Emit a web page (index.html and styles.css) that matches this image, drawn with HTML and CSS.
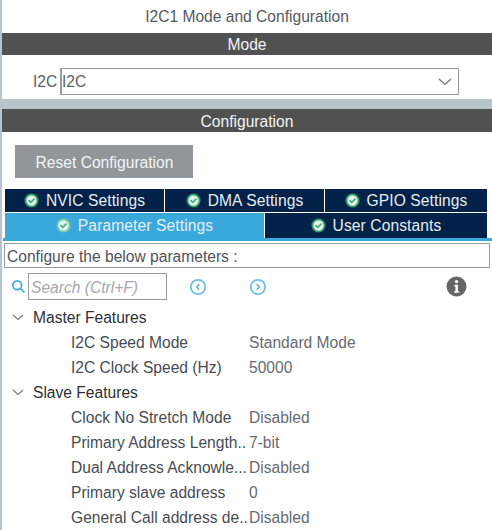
FILE: index.html
```html
<!DOCTYPE html>
<html lang="en">
<head>
  <meta charset="UTF-8">
  <title>I2C1 Mode and Configuration</title>
  <link rel="stylesheet" href="styles.css">
</head>
<body>
  <div class="panel">
    <div class="title">I2C1 Mode and Configuration</div>
    <div class="bar">Mode</div>
    <div class="mode-row">
      <span class="mode-label">I2C</span>
      <div class="select">
        <span>I2C</span>
        <svg class="caret" width="14" height="8" viewBox="0 0 14 8"><path d="M1 1l6 5.5L13 1" fill="none" stroke="#6d7276" stroke-width="1.2"/></svg>
      </div>
    </div>
    <div class="band"></div>
    <div class="bar bar-config">Configuration</div>
    <div class="reset-row"><button class="reset">Reset Configuration</button></div>

    <div class="tabs">
      <div class="tab-row">
        <div class="tab tab-nvic"><svg class="check" viewBox="0 0 16 16"><circle cx="8" cy="8" r="6.5" fill="#e4f3ea" stroke="#2f9e68" stroke-width="2"/><path d="M4.8 7.6l2.4 2.4 4-4" fill="none" stroke="#3fae78" stroke-width="1.6"/></svg>NVIC Settings</div>
        <div class="tab tab-dma"><svg class="check" viewBox="0 0 16 16"><circle cx="8" cy="8" r="6.5" fill="#e4f3ea" stroke="#2f9e68" stroke-width="2"/><path d="M4.8 7.6l2.4 2.4 4-4" fill="none" stroke="#3fae78" stroke-width="1.6"/></svg>DMA Settings</div>
        <div class="tab tab-gpio"><svg class="check" viewBox="0 0 16 16"><circle cx="8" cy="8" r="6.5" fill="#e4f3ea" stroke="#2f9e68" stroke-width="2"/><path d="M4.8 7.6l2.4 2.4 4-4" fill="none" stroke="#3fae78" stroke-width="1.6"/></svg>GPIO Settings</div>
      </div>
      <div class="tab-row tab-row-low">
        <div class="tab tab-active"><svg class="check" viewBox="0 0 16 16"><circle cx="8" cy="8" r="6.5" fill="#e4f3ea" stroke="#7cc8a8" stroke-width="2"/><path d="M4.8 7.6l2.4 2.4 4-4" fill="none" stroke="#3fae78" stroke-width="1.6"/></svg>Parameter Settings</div>
        <div class="tab tab-user"><svg class="check" viewBox="0 0 16 16"><circle cx="8" cy="8" r="6.5" fill="#e4f3ea" stroke="#2f9e68" stroke-width="2"/><path d="M4.8 7.6l2.4 2.4 4-4" fill="none" stroke="#3fae78" stroke-width="1.6"/></svg>User Constants</div>
      </div>
    </div>
    <div class="tab-line"></div>

    <div class="hint">Configure the below parameters :</div>

    <div class="search-row">
      <svg class="search-icon" width="15" height="15" viewBox="0 0 15 15"><circle cx="6.2" cy="6.2" r="4.4" fill="none" stroke="#3daadc" stroke-width="1.7"/><path d="M9.5 9.5l4 4" stroke="#3daadc" stroke-width="1.7"/></svg>
      <div class="search">Search (Ctrl+F)</div>
      <svg class="nav nav-prev" width="18" height="18" viewBox="0 0 18 18"><circle cx="9" cy="9" r="7.2" fill="none" stroke="#6fc0e8" stroke-width="1.8"/><path d="M10.3 6.2L7.6 9l2.7 2.8" fill="none" stroke="#3daadc" stroke-width="1.2"/></svg>
      <svg class="nav nav-next" width="18" height="18" viewBox="0 0 18 18"><circle cx="9" cy="9" r="7.2" fill="none" stroke="#6fc0e8" stroke-width="1.8"/><path d="M7.7 6.2L10.4 9l-2.7 2.8" fill="none" stroke="#3daadc" stroke-width="1.2"/></svg>
      <svg class="info" width="21" height="21" viewBox="0 0 21 21"><circle cx="10.5" cy="10.5" r="10" fill="#666"/><circle cx="10.5" cy="5.6" r="1.7" fill="#fff"/><path d="M8.4 8.8h3.6v6.4h1.2v1.6H8.2v-1.6h1.2v-4.8h-1z" fill="#fff"/></svg>
    </div>

    <div class="tree">
      <div class="group"><svg class="fold" width="12" height="7" viewBox="0 0 12 7"><path d="M1 1l5 4.5L11 1" fill="none" stroke="#75797c" stroke-width="1.2"/></svg>Master Features</div>
      <div class="param"><span class="name">I2C Speed Mode</span><span class="value">Standard Mode</span></div>
      <div class="param"><span class="name">I2C Clock Speed (Hz)</span><span class="value">50000</span></div>
      <div class="group"><svg class="fold" width="12" height="7" viewBox="0 0 12 7"><path d="M1 1l5 4.5L11 1" fill="none" stroke="#75797c" stroke-width="1.2"/></svg>Slave Features</div>
      <div class="param"><span class="name">Clock No Stretch Mode</span><span class="value">Disabled</span></div>
      <div class="param"><span class="name">Primary Address Length..</span><span class="value">7-bit</span></div>
      <div class="param"><span class="name">Dual Address Acknowle...</span><span class="value">Disabled</span></div>
      <div class="param"><span class="name">Primary slave address</span><span class="value">0</span></div>
      <div class="param"><span class="name">General Call address de..</span><span class="value">Disabled</span></div>
    </div>
  </div>
</body>
</html>
```

FILE: styles.css
```css
html, body {
  margin: 0;
  height: 100%;
  overflow: hidden;
}
body {
  font-family: 'Liberation Sans', Arial, sans-serif;
  font-size: 15.6px;
  color: #4f5359;
  background: #fff;
}
.panel {
  height: 530px;
  border-left: 2px solid #b8c4cc;
  overflow: hidden;
}
.title {
  height: 33px;
  line-height: 33px;
  text-align: center;
  color: #555a60;
}
.bar {
  height: 22px;
  line-height: 24px;
  background: #505150;
  color: #f2f5f7;
  text-align: center;
}
.bar-config {
  height: 23px;
  line-height: 26px;
}
.mode-row {
  height: 44px;
  display: flex;
  align-items: flex-start;
  padding-top: 13px;
  box-sizing: border-box;
}
.mode-label {
  margin-left: 31px;
  width: 27px;
  line-height: 27px;
  color: #5a5f66;
}
.select {
  width: 399px;
  height: 27px;
  box-sizing: border-box;
  border: 1px solid #969ca2;
  border-left-width: 2px;
  display: flex;
  align-items: center;
  justify-content: space-between;
  padding: 0 6px 0 0;
  color: #5a5f66;
}
.band {
  height: 10px;
  background: #b8c4cc;
}
.reset-row {
  padding: 13px 0 11px 13px;
}
.reset {
  display: block;
  width: 178px;
  height: 33px;
  border: none;
  padding: 2px 0 0 1px;
  background: #91969b;
  color: #f4f5f6;
  font-family: inherit;
  font-size: 15.6px;
}
.tabs {
  margin-left: 3px;
  width: 482px;
}
.tab-row {
  display: flex;
  height: 24px;
}
.tab-row-low {
  height: 25px;
}
.tab {
  display: flex;
  align-items: center;
  justify-content: center;
  background: #022249;
  color: #e8edf2;
  border-bottom: 1px solid #fff;
  box-sizing: border-box;
  letter-spacing: 0.1px;
}
.tab-nvic, .tab-dma {
  width: 160px;
  border-right: 1px solid #fff;
}
.tab-gpio {
  width: 162px;
}
.tab-active {
  width: 260px;
  background: #39a9dc;
  border-bottom: none;
  border-right: 1px solid #fff;
}
.tab-user {
  width: 222px;
  border-bottom: none;
}
.check {
  width: 15px;
  height: 15px;
  margin-right: 7px;
}
.tab-line {
  height: 3px;
  background: #39a9dc;
  margin-left: 1px;
}
.hint {
  margin: 2px 2px 0 2px;
  height: 25px;
  line-height: 26px;
  box-sizing: border-box;
  border: 1px solid #969ca2;
  padding-left: 2px;
  color: #4f5359;
}
.search-row {
  height: 27px;
  margin-top: 5px;
  display: flex;
  align-items: center;
}
.search-icon {
  margin-left: 9px;
  margin-right: 2px;
}
.search {
  width: 139px;
  height: 27px;
  line-height: 28px;
  box-sizing: border-box;
  border: 1px solid #969ca2;
  padding-left: 2px;
  font-style: italic;
  color: #a4a8ac;
}
.nav-prev {
  margin-left: 22px;
}
.nav-next {
  margin-left: 42px;
}
.info {
  margin-left: 179px;
}
.tree {
  padding-top: 5px;
}
.group {
  display: flex;
  align-items: center;
  height: 25px;
  color: #2c3036;
}
.fold {
  margin-left: 10px;
  margin-right: 9px;
}
.param {
  display: flex;
  height: 25px;
  line-height: 25px;
}
.name {
  width: 178px;
  margin-left: 69px;
  white-space: nowrap;
  overflow: hidden;
  color: #474c52;
}
.value {
  color: #666b70;
}
```
